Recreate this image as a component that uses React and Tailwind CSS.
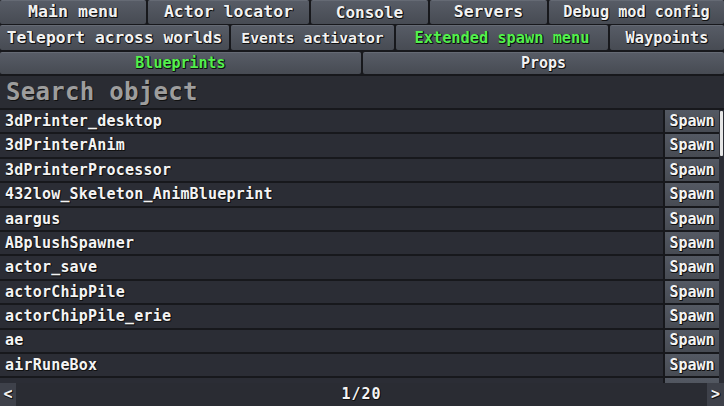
import React from "react";

const topRow = [
  { label: "Main menu", w: "w-[146px]", size: "text-[16.6px]" },
  { label: "Actor locator", w: "w-[161px]", size: "text-[16.5px]" },
  { label: "Console", w: "w-[117px]", size: "text-[16px]" },
  { label: "Servers", w: "w-[117px]", size: "text-[16.5px]" },
  { label: "Debug mod config", w: "flex-1", size: "text-[15.2px]" },
];

const secondRow = [
  { label: "Teleport across worlds", w: "w-[229px]", size: "text-[16.3px]" },
  { label: "Events activator", w: "w-[163px]", size: "text-[14.8px]" },
  { label: "Extended spawn menu", w: "w-[212px]", size: "text-[15.3px]", active: true },
  { label: "Waypoints", w: "flex-1", size: "text-[15.3px]" },
];

const items = [
  "3dPrinter_desktop",
  "3dPrinterAnim",
  "3dPrinterProcessor",
  "432low_Skeleton_AnimBlueprint",
  "aargus",
  "ABplushSpawner",
  "actor_save",
  "actorChipPile",
  "actorChipPile_erie",
  "ae",
  "airRuneBox",
];

const shadow = "[text-shadow:1px_1px_0_#111,1px_0_0_#111,0_1px_0_#111]";

function NavButton({ label, w, size, active }) {
  return (
    <button
      className={`${w} ${size} h-full flex items-center justify-center rounded-[2px] bg-gradient-to-b from-[#575c66] to-[#474b53] border-t border-[#656a74] font-bold ${shadow} ${
        active ? "text-[#52f04e]" : "text-[#f2f2f2]"
      }`}
    >
      {label}
    </button>
  );
}

function Row({ name }) {
  return (
    <div className="h-[24.4px] shrink-0 flex border-b-2 border-[#17181c]">
      <div className="flex-1 bg-[#2b2d35] flex items-center pl-[5px]">
        {name && (
          <span className={`text-[15px] font-bold text-[#f4f4f4] tracking-[0.2px] ${shadow}`}>
            {name}
          </span>
        )}
      </div>
      <div className="w-[54px] ml-[2px] bg-gradient-to-b from-[#545963] to-[#474b53] flex items-center justify-center">
        {name && <span className={`text-[15px] font-bold text-[#f4f4f4] ${shadow}`}>Spawn</span>}
      </div>
    </div>
  );
}

export default function App() {
  return (
    <div
      className="w-[724px] h-[406px] bg-[#17181c] flex flex-col overflow-hidden"
      style={{ fontFamily: '"DejaVu Sans Mono", "Liberation Mono", monospace' }}
    >
      {/* top menu */}
      <div className="flex gap-[2px] h-[24px] shrink-0">
        {topRow.map((b) => (
          <NavButton key={b.label} {...b} />
        ))}
      </div>
      <div className="flex gap-[2px] h-[25px] mt-[1px] shrink-0">
        {secondRow.map((b) => (
          <NavButton key={b.label} {...b} />
        ))}
      </div>

      {/* tabs */}
      <div className="flex gap-[2px] h-[22px] mt-[2px] shrink-0">
        <NavButton label="Blueprints" w="flex-1" size="text-[15px]" active />
        <NavButton label="Props" w="flex-1" size="text-[15px]" />
      </div>

      {/* search */}
      <div className="h-[32px] mt-[2px] shrink-0 bg-[#2a2c33] flex items-center pl-[6px]">
        <span className="text-[24px] font-bold text-[#9d9d9d] tracking-[0.3px] [text-shadow:1px_1px_0_#111]">
          Search object
        </span>
      </div>

      {/* list */}
      <div className="flex flex-1 min-h-0 overflow-hidden border-t-2 border-[#17181c]">
        <div className="flex-1 flex flex-col overflow-hidden">
          {items.map((name) => (
            <Row key={name} name={name} />
          ))}
          <Row />
        </div>
        {/* scrollbar */}
        <div className="w-[5px] bg-[#2b2d35] flex justify-center">
          <div className="w-[3px] h-[45px] mt-[1px] bg-[#e6e6e6] rounded-[1px]" />
        </div>
      </div>

      {/* pagination */}
      <div className="h-[23px] shrink-0 bg-[#2a2c33] flex items-stretch">
        <button className={`w-[16px] bg-[#3e414a] text-[#f2f2f2] text-[15px] font-bold flex items-center justify-center ${shadow}`}>
          &lt;
        </button>
        <div className="flex-1 flex items-center justify-center">
          <span className={`text-[15px] font-bold text-[#f4f4f4] tracking-[1px] ${shadow}`}>1/20</span>
        </div>
        <button className={`w-[17px] bg-[#3e414a] text-[#f2f2f2] text-[15px] font-bold flex items-center justify-center ${shadow}`}>
          &gt;
        </button>
      </div>
    </div>
  );
}
